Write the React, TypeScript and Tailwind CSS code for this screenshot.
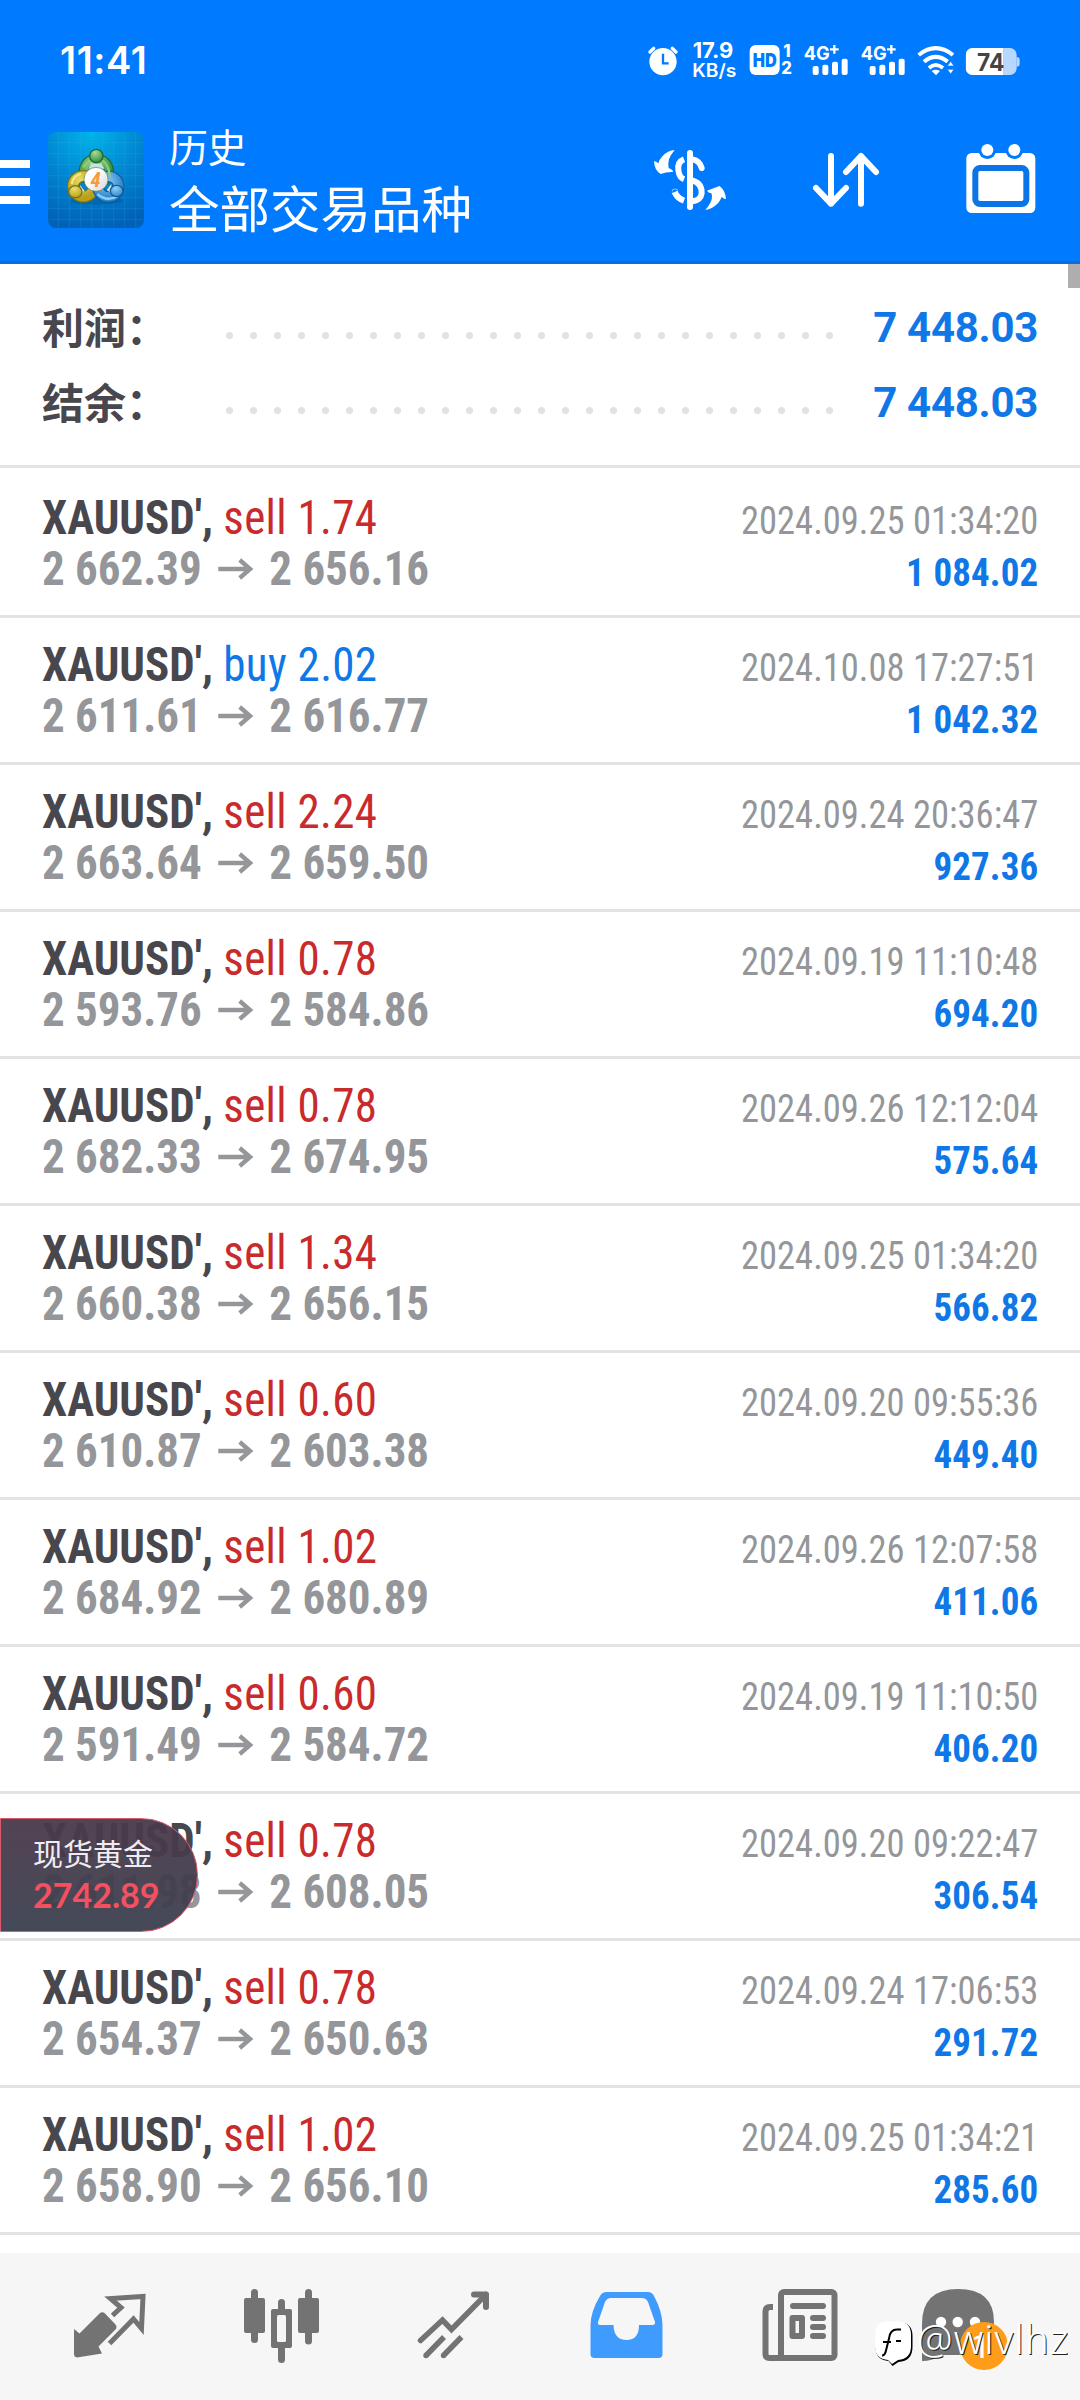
import type { ReactNode } from "react";

type Deal = { side: "sell" | "buy"; lot: string; open: string; close: string; time: string; profit: string };

const deals: Deal[] = [
  { side: "sell", lot: "1.74", open: "2 662.39", close: "2 656.16", time: "2024.09.25 01:34:20", profit: "1 084.02" },
  { side: "buy", lot: "2.02", open: "2 611.61", close: "2 616.77", time: "2024.10.08 17:27:51", profit: "1 042.32" },
  { side: "sell", lot: "2.24", open: "2 663.64", close: "2 659.50", time: "2024.09.24 20:36:47", profit: "927.36" },
  { side: "sell", lot: "0.78", open: "2 593.76", close: "2 584.86", time: "2024.09.19 11:10:48", profit: "694.20" },
  { side: "sell", lot: "0.78", open: "2 682.33", close: "2 674.95", time: "2024.09.26 12:12:04", profit: "575.64" },
  { side: "sell", lot: "1.34", open: "2 660.38", close: "2 656.15", time: "2024.09.25 01:34:20", profit: "566.82" },
  { side: "sell", lot: "0.60", open: "2 610.87", close: "2 603.38", time: "2024.09.20 09:55:36", profit: "449.40" },
  { side: "sell", lot: "1.02", open: "2 684.92", close: "2 680.89", time: "2024.09.26 12:07:58", profit: "411.06" },
  { side: "sell", lot: "0.60", open: "2 591.49", close: "2 584.72", time: "2024.09.19 11:10:50", profit: "406.20" },
  { side: "sell", lot: "0.78", open: "2 611.98", close: "2 608.05", time: "2024.09.20 09:22:47", profit: "306.54" },
  { side: "sell", lot: "0.78", open: "2 654.37", close: "2 650.63", time: "2024.09.24 17:06:53", profit: "291.72" },
  { side: "sell", lot: "1.02", open: "2 658.90", close: "2 656.10", time: "2024.09.25 01:34:21", profit: "285.60" },
];

/* An svg drawn on a window of a larger coordinate grid. */
function Glyph({ x, y, w, h, k = 1, children }: { x: number; y: number; w: number; h: number; k?: number; children: ReactNode }) {
  return (
    <svg className="block shrink-0" width={w / k} height={h / k} viewBox={`${x} ${y} ${w} ${h}`}>
      {children}
    </svg>
  );
}

function Signal() {
  return (
    <g fill="#fff">
      <text x="552" y="119" fontSize="58" fontWeight="700" fontFamily="Inter, sans-serif" textLength="78" lengthAdjust="spacingAndGlyphs">4G</text>
      <path d="M644 75v26M631 88h26" stroke="#fff" strokeWidth="7" />
      <rect x="579" y="138" width="18" height="27" rx="6" />
      <rect x="608" y="134" width="18" height="31" rx="6" />
      <rect x="637" y="125" width="18" height="40" rx="6" />
      <rect x="666" y="116" width="18" height="49" rx="6" />
    </g>
  );
}

function StatusBar() {
  return (
    <div className="flex h-[100px] items-start justify-between pl-[60px] pt-[40px] text-white">
      <span className="font-['Inter'] text-[38px] font-semibold leading-[40px] tracking-[0.6px]">11:41</span>
      <div className="mr-[60px] flex">
        <Glyph x={84} y={60} w={132} h={120} k={3}>
          <g stroke="#fff" strokeWidth="10" strokeLinecap="round">
            <path d="M90 96l11-11M168 96l-11-11" />
          </g>
          <circle cx="129" cy="125" r="41" fill="#fff" />
          <path d="M129 101v29h17" fill="none" stroke="#007aff" strokeWidth="7" />
        </Glyph>
        <Glyph x={216} y={60} w={172} h={120} k={3}>
          <g fill="#fff" fontFamily="Inter, sans-serif" fontWeight="700">
            <text x="218" y="115" fontSize="64" textLength="122" lengthAdjust="spacingAndGlyphs">17.9</text>
            <text x="217" y="171" fontSize="54" fontWeight="600" textLength="132" lengthAdjust="spacingAndGlyphs">KB/s</text>
          </g>
        </Glyph>
        <Glyph x={388} y={60} w={162} h={120} k={3}>
          <rect x="390" y="75" width="90" height="90" rx="18" fill="#fff" />
          <g fontFamily="Inter, sans-serif">
            <text x="399" y="140" fontSize="56" fontWeight="900" fill="#007aff" textLength="72" lengthAdjust="spacingAndGlyphs">HD</text>
            <text x="491" y="112" fontSize="50" fontWeight="800" fill="#fff">1</text>
            <text x="485" y="163" fontSize="50" fontWeight="800" fill="#fff">2</text>
          </g>
        </Glyph>
        <Glyph x={550} y={60} w={171} h={120} k={3}><Signal /></Glyph>
        <Glyph x={550} y={60} w={171} h={120} k={3}><Signal /></Glyph>
        <Glyph x={892} y={60} w={144} h={120} k={3}>
          <g fill="none" stroke="#fff" strokeWidth="12">
            <path d="M897 105Q948 64 1000 105" />
            <path d="M913 125Q948 96 984 125" />
            <path d="M928 144Q948 126 970 144" />
          </g>
          <path d="M936 153q12-8 25 0l-12 13z" fill="#fff" />
          <path d="M993 124l10 14h-20zM993 162l10-14h-20z" fill="#fff" stroke="#007aff" strokeWidth="2" />
        </Glyph>
        <Glyph x={1036} y={60} w={164} h={120} k={3}>
          <defs>
            <clipPath id="cell"><rect x="1038" y="84" width="153" height="81" rx="20" /></clipPath>
          </defs>
          <g clipPath="url(#cell)">
            <path d="M1038 84h114v81h-114z" fill="#fff" />
            <path d="M1152 84h40v81h-40z" fill="#b8d7ff" />
          </g>
          <path d="M1191 111q9 0 9 9v11q0 9-9 9z" fill="#b8d7ff" />
          <text x="1072" y="152" fontSize="73" fontWeight="700" fill="#444" fontFamily="Inter, sans-serif" textLength="82" lengthAdjust="spacingAndGlyphs">74</text>
        </Glyph>
      </div>
    </div>
  );
}

function Logo() {
  return (
    <svg className="ml-[18px] mt-[32px] block shrink-0" width="96" height="96" viewBox="54 66 288 288">
      <defs>
        <radialGradient id="tile" cx="0.45" cy="0" r="1">
          <stop offset="0" stopColor="#00b4ea" />
          <stop offset="0.5" stopColor="#0088d2" />
          <stop offset="1" stopColor="#0062b6" />
        </radialGradient>
        <radialGradient id="green" cx="0.4" cy="0.25" r="0.8"><stop offset="0" stopColor="#a8dc9c" /><stop offset="1" stopColor="#2b8a3a" /></radialGradient>
        <radialGradient id="gold" cx="0.4" cy="0.25" r="0.8"><stop offset="0" stopColor="#ece069" /><stop offset="1" stopColor="#b89f1c" /></radialGradient>
        <radialGradient id="sky" cx="0.4" cy="0.25" r="0.8"><stop offset="0" stopColor="#8fd0f5" /><stop offset="1" stopColor="#2f86cc" /></radialGradient>
        <linearGradient id="disc" x1="0" y1="0" x2="1" y2="1"><stop offset="0.4" stopColor="#fff" /><stop offset="1" stopColor="#d4d4d6" /></linearGradient>
      </defs>
      <rect x="54" y="66" width="288" height="288" rx="24" fill="url(#tile)" />
      <path d="M85 66v288M118 66v288M152 66v288M185 66v288M218 66v288M251 66v288M284 66v288M317 66v288M54 98h288M54 131h288M54 164h288M54 197h288M54 230h288M54 263h288M54 296h288M54 329h288" stroke="#5cc4f2" strokeOpacity="0.22" strokeWidth="2" fill="none" />
      <ellipse cx="200" cy="272" rx="78" ry="12" fill="#003a80" opacity="0.25" />
      <g fill="none">
        <circle cx="199" cy="184" r="38" stroke="#1d6a35" strokeWidth="30" />
        <circle cx="199" cy="184" r="38" stroke="url(#green)" strokeWidth="23" />
        <circle cx="160" cy="229" r="31" stroke="#7a7410" strokeWidth="36" />
        <circle cx="160" cy="229" r="31" stroke="url(#gold)" strokeWidth="29" />
        <circle cx="235" cy="230" r="31" stroke="#155a98" strokeWidth="35" />
        <circle cx="235" cy="230" r="31" stroke="url(#sky)" strokeWidth="28" />
        <path d="M160 172Q176 146 199 146Q235 150 240 200" stroke="#8bcf72" strokeWidth="7" />
        <path d="M125 222q4-24 28-31" stroke="#f4e884" strokeWidth="7" />
        <path d="M202 252q30 26 61 5" stroke="#8bd0f4" strokeWidth="7" />
      </g>
      <path d="M184 160l-10 16h50l-10-16z" fill="#e4f3e2" opacity="0.85" />
      <path d="M150 226l14 16-14 12zM244 222l-14 18 14 10z" fill="#f6f7e4" opacity="0.85" />
      <circle cx="199" cy="138" r="20" fill="url(#green)" stroke="#1d6a35" strokeWidth="4" />
      <ellipse cx="136" cy="245" rx="20" ry="18" fill="url(#gold)" stroke="#7a7410" strokeWidth="4" />
      <ellipse cx="260" cy="243" rx="19" ry="17" fill="url(#sky)" stroke="#155a98" strokeWidth="4" />
      <circle cx="198" cy="208" r="36" fill="url(#disc)" stroke="#5c7450" strokeWidth="2" />
      <text x="197" y="230" fontSize="62" fontStyle="italic" fontWeight="700" textAnchor="middle" fill="#f79a3c" className="font-['Roboto'] [font-stretch:75%]">4</text>
    </svg>
  );
}

function Header() {
  return (
    <header className="h-[264px] border-b-3 border-[#0d6cd8] bg-[#007aff]">
      <StatusBar />
      <div className="flex h-[161px] items-start text-white">
        <div className="mt-[60px] flex w-[30px] flex-col gap-[10px]">
          <div className="h-[8px] bg-white" />
          <div className="h-[8px] bg-white" />
          <div className="h-[8px] bg-white" />
        </div>
        <Logo />
        <div className="ml-[25px] mt-[15px] font-['Noto_Sans_CJK_SC',sans-serif] leading-[61px]">
          <div className="text-[39px] tracking-[-0.5px]">历史</div>
          <div className="text-[50.5px]">全部交易品种</div>
        </div>
        <div className="ml-auto mr-[42px] mt-[30px] flex">
          <Glyph x={0} y={0} w={480} h={270} k={3}>
            <g fill="#fff">
              <rect x="141" y="60" width="18" height="180" rx="9" />
              <path d="M104 60Q84 60 66 80Q58 88 55 100Q47 93 42 94Q43 121 62 132Q80 125 99 126Q100 120 86 114Q83 104 87 88Q92 74 104 60z" />
              <path d="M196 240Q216 238 234 220Q243 206 245 200Q252 208 258 207Q256 182 239 168Q222 174 201 182Q204 188 214 190Q219 202 212 216Q206 230 196 240z" />
            </g>
            <g fill="none" stroke="#fff" strokeWidth="18" strokeLinecap="round">
              <path d="M158 88Q179 92 185 114" />
              <path d="M158 152Q186 160 185 190Q182 210 158 214" />
              <path d="M104 186Q112 205 132 212" strokeLinecap="butt" />
              <circle cx="105" cy="186" r="0.5" />
              <path d="M132 88Q112 96 115 120Q117 142 132 148" strokeLinecap="butt" />
            </g>
          </Glyph>
          <Glyph x={540} y={330} w={470} h={270} k={3}>
            <g fill="none" stroke="#fff" strokeWidth="18" strokeLinecap="round" strokeLinejoin="round">
              <path d="M633 408v143M588 504l45 47 45-47" />
              <path d="M723 551V408M678 456l45-48 45 48" />
            </g>
          </Glyph>
          <Glyph x={1010} y={330} w={244} h={270} k={3}>
            <rect x="1038" y="399" width="207" height="180" rx="16" fill="#fff" />
            <circle cx="1101" cy="390" r="27" fill="#007aff" />
            <circle cx="1182" cy="390" r="27" fill="#007aff" />
            <circle cx="1101" cy="390" r="18" fill="#fff" />
            <circle cx="1182" cy="390" r="18" fill="#fff" />
            <rect x="1065" y="444" width="153" height="108" rx="14" fill="#fff" stroke="#0b74e8" strokeWidth="18" />
          </Glyph>
        </div>
      </div>
    </header>
  );
}

function SummaryRow({ label, value }: { label: string; value: string }) {
  return (
    <div className="flex h-[75px] items-center">
      <span className="-mt-[5px] w-[184px] font-['Noto_Sans_CJK_SC',sans-serif] text-[42px] font-bold leading-[75px] text-[#47474d]">{label}</span>
      <div className="flex w-[607px] justify-between">
        {Array.from({ length: 26 }, (_, i) => (
          <span key={i} className="mt-[15px] size-[7px] rounded-full bg-[#e2e2e3]" />
        ))}
      </div>
      <span className="ml-auto font-['Roboto'] text-[42px] font-bold leading-[75px] tracking-[-0.3px] text-[#0f78e6]">{value}</span>
    </div>
  );
}

function DealRow({ deal }: { deal: Deal }) {
  return (
    <div className="flex h-[147px] justify-between border-b-3 border-[#e3e3e3] px-[42px] pt-[21px] font-['Roboto'] leading-[51px] whitespace-nowrap [font-stretch:75%]">
      <div className="origin-left scale-x-[0.937] text-[48px]">
        <div>
          <span className="font-bold text-[#47474d]">XAUUSD', </span>
          <span className={deal.side === "sell" ? "tracking-[0.35px] text-[#c92a2c]" : "tracking-[0.35px] text-[#0f78e6]"}>
            {deal.side} {deal.lot}
          </span>
        </div>
        <div className="flex items-center font-bold text-[#949699]">
          {deal.open}
          <svg className="ml-[17px] mr-[17px]" width="38" height="22" viewBox="0 0 38 22" fill="none" stroke="#949699" strokeWidth="4.6">
            <path d="M0 11h35M23 2l11 9-11 9" />
          </svg>
          {deal.close}
        </div>
      </div>
      <div className="origin-right scale-x-[0.937] pt-[1px] text-right">
        <div className="pt-[3px] text-[39px] text-[#949699]">{deal.time}</div>
        <div className="text-[39.5px] font-bold tracking-[0.1px] text-[#0f78e6]">{deal.profit}</div>
      </div>
    </div>
  );
}

function TabBar() {
  return (
    <nav className="relative flex h-[147px] bg-[#f6f6f6] pl-[60px] pt-[27px] text-[#737373]">
      <Glyph x={60} y={2280} w={175} h={90}>
        <path d="M74 2329l5.5 4.5 20-20q3-2.500 5.500 0l10.500 11q2 2.500 0 5l-17 17 3.500 7-25 4q-3-0.500-3-3.500z" fill="currentColor" />
        <path d="M112.500 2315.500l8.500-8-10.500-9 32.500-2-1.500 32-8-9.500-24 24.500" fill="none" stroke="currentColor" strokeWidth="5" />
      </Glyph>
      <Glyph x={235} y={2280} w={173} h={90}>
        <g fill="currentColor">
          <rect x="244" y="2298" width="21" height="35" rx="2" />
          <rect x="251" y="2289" width="7" height="54" rx="3.500" />
          <rect x="298" y="2298" width="21" height="35" rx="2" />
          <rect x="305" y="2289" width="7" height="55.500" rx="3.500" />
          <rect x="271" y="2309" width="21" height="39" rx="2" />
          <rect x="278" y="2299" width="7" height="64" rx="3.500" />
        </g>
        <rect x="277" y="2315" width="9" height="27" rx="1.500" fill="#f6f6f6" />
      </Glyph>
      <Glyph x={408} y={2280} w={172} h={90}>
        <g fill="none" stroke="currentColor" strokeWidth="5.500">
          <path d="M420.500 2340.500l22-20.500 9 9.500 34.500-35" strokeLinecap="round" />
          <path d="M474 2294.500h12v12.500" strokeWidth="6" strokeLinecap="round" strokeLinejoin="round" />
          <path d="M426 2355.500l18-18.500M443.500 2355.500l18-18.500" />
        </g>
        <g fill="currentColor">
          <circle cx="426" cy="2355.500" r="2.700" />
          <circle cx="443.500" cy="2355.500" r="2.700" />
        </g>
      </Glyph>
      <Glyph x={580} y={2280} w={172} h={90}>
        <path
          fill="#409bff"
          fillRule="evenodd"
          d="M607 2292H648Q652 2292 654 2296Q662.500 2312 662.500 2325V2354Q662.500 2358 658.500 2358H594.500Q590.500 2358 590.500 2354V2325Q590.500 2312 600 2296Q602 2292 607 2292zM611 2298Q607 2298 605 2302L598 2322Q597.500 2325 600 2325H613.500Q614 2340 626.500 2340Q639 2340 639 2325H652.500Q655.500 2325 655 2322L648 2302Q646 2298 642 2298z"
        />
      </Glyph>
      <Glyph x={752} y={2280} w={100} h={90}>
        <g fill="none" stroke="currentColor" strokeWidth="6">
          <rect x="781" y="2292" width="53.500" height="66" rx="3" />
          <path d="M773 2307h-3q-4.500 0-4.500 4.500V2354q0 4 4 4h14" />
        </g>
        <g fill="currentColor">
          <rect x="790" y="2303" width="36" height="6" rx="3" />
          <rect x="810" y="2315" width="16" height="6" rx="3" />
          <rect x="810" y="2324" width="16" height="6" rx="3" />
          <rect x="810" y="2333" width="16" height="6" rx="3" />
        </g>
        <rect x="792.500" y="2318" width="9.500" height="18" fill="none" stroke="currentColor" strokeWidth="6" strokeLinejoin="round" />
      </Glyph>
      <Glyph x={852} y={2280} w={168} h={100}>
        <path d="M922 2324Q922 2289 958 2289Q994 2289 994 2322Q994 2355 958 2355H943Q932 2361 922 2361z" fill="currentColor" />
        <circle cx="941" cy="2322" r="5.200" fill="#fff" />
        <circle cx="957.700" cy="2322" r="5.200" fill="#fff" />
        <circle cx="975" cy="2322" r="5.200" fill="#fff" />
        <circle cx="984" cy="2346" r="24" fill="#ff9d1a" />
        <text x="981" y="2358" fontSize="34" textAnchor="middle" fill="#fff" fontFamily="Roboto, sans-serif">1</text>
      </Glyph>
      <div className="absolute left-[870px] top-[65px] flex items-start">
        <svg width="46" height="48" viewBox="870 2318 46 48">
          <path d="M886 2322.500H900Q913 2322.500 913 2336V2347Q913 2361 899 2362L893 2366 889 2361Q876 2360 876 2347V2336Q876 2322.500 886 2322.500z" fill="#000" transform="translate(-0.500 0)" />
          <path d="M886 2321.500H898Q911 2321.500 911 2335V2346Q911 2359 898 2360L892 2364 888 2360Q875 2359 875 2346V2335Q875 2321.500 886 2321.500z" fill="#fff" />
          <path d="M901 2329.500h-4q-7 0-8 9l-3 12q-1 5-4 5M883 2342h8M896 2341h5" fill="none" stroke="#000" strokeWidth="2" />
        </svg>
        <span className="ml-[1px] font-['Noto_Sans'] text-[40px] font-light leading-[42px] tracking-[1.1px] text-white [text-shadow:1px_1px_0_#222]">@wivlhz</span>
      </div>
    </nav>
  );
}

export default function App() {
  return (
    <div className="relative flex h-[2400px] w-[1080px] flex-col overflow-hidden bg-white">
      <Header />
      <section className="h-[204px] border-b-3 border-[#e3e3e3] px-[42px] pt-[26px]">
        <SummaryRow label="利润：" value="7 448.03" />
        <SummaryRow label="结余：" value="7 448.03" />
      </section>
      <main className="flex-1 pt-[3px]">
        {deals.map((deal, i) => (
          <DealRow key={i} deal={deal} />
        ))}
      </main>
      <TabBar />
      <div className="absolute right-0 top-[264px] h-[24px] w-[12px] bg-[#aeaeae]" />
      <div className="absolute left-0 top-[1818px] flex h-[114px] w-[198px] flex-col rounded-r-full border border-[#d95a6c] bg-gradient-to-b from-[#4a394a]/95 to-[#3b404f]/95 pl-[32px] pt-[13px]">
        <span className="font-['Noto_Sans_CJK_SC',sans-serif] text-[30px] leading-[40px] text-[#eeecf2]">现货黄金</span>
        <span className="font-['Lato'] text-[34px] font-bold leading-[46px] text-[#f5505f]">2742.89</span>
      </div>
    </div>
  );
}
